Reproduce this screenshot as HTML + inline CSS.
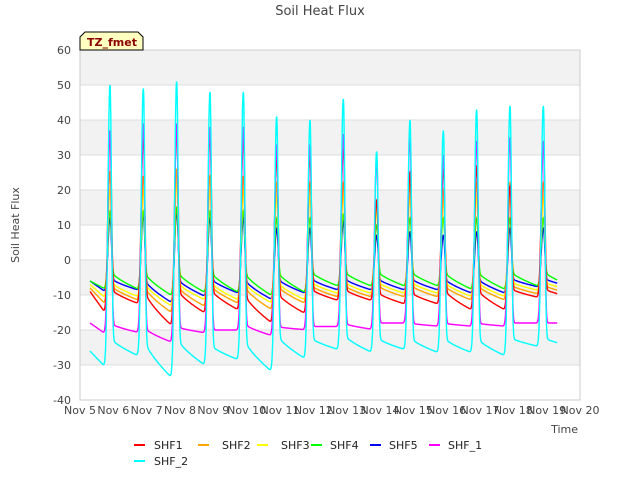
<!DOCTYPE html>
<html><head><meta charset="utf-8"><style>
body{margin:0;background:#fff;font-family:"DejaVu Sans","Liberation Sans",sans-serif;}
</style></head><body>
<svg id="s" width="640" height="480" xmlns="http://www.w3.org/2000/svg" font-family="DejaVu Sans, Liberation Sans, sans-serif">
<rect width="640" height="480" fill="#fff"/>
<g id="bands"></g>
<rect x="80" y="50" width="500" height="350" fill="none" stroke="#ccc"/>
<text x="320" y="15" text-anchor="middle" font-size="13" fill="#444">Soil Heat Flux</text>
<text x="19" y="225" font-size="11" fill="#444" text-anchor="middle" transform="rotate(-90 19 225)">Soil Heat Flux</text>
<text x="578" y="433" font-size="11" fill="#444" text-anchor="end">Time</text>
<g id="ticks" font-size="11" fill="#444"></g>
<g id="lines" fill="none"></g>
<path d="M80,50 L80,37 L85,32 L138,32 L143,37 L143,50 Z" fill="#ffffc0" stroke="#000"/>
<text x="87" y="46" font-size="11" font-weight="bold" fill="#8b0000">TZ_fmet</text>
<g font-size="11" fill="#222">
<line x1="134" y1="445" x2="145" y2="445" stroke="#f00" stroke-width="2"/><text x="154" y="449">SHF1</text>
<line x1="198" y1="445" x2="209" y2="445" stroke="#ffa500" stroke-width="2"/><text x="222" y="449">SHF2</text>
<line x1="257" y1="445" x2="268" y2="445" stroke="#ff0" stroke-width="2"/><text x="281" y="449">SHF3</text>
<line x1="311" y1="445" x2="322" y2="445" stroke="#0f0" stroke-width="2"/><text x="330" y="449">SHF4</text>
<line x1="370" y1="445" x2="381" y2="445" stroke="#00f" stroke-width="2"/><text x="389" y="449">SHF5</text>
<line x1="429" y1="445" x2="440" y2="445" stroke="#f0f" stroke-width="2"/><text x="448" y="449">SHF_1</text>
<line x1="134" y1="461" x2="145" y2="461" stroke="#0ff" stroke-width="2"/><text x="154" y="465">SHF_2</text>
</g>
</svg>
<script>
var NS="http://www.w3.org/2000/svg";
function el(p,n,a,t){var e=document.createElementNS(NS,n);for(var k in a)e.setAttribute(k,a[k]);if(t!=null)e.textContent=t;p.appendChild(e);return e;}
var Y=function(v){return 400-(v+40)*3.5;},X=function(d){return 80+(d-5)*33.333;};
var b=document.getElementById('bands'),tk=document.getElementById('ticks');
el(b,'rect',{x:80,y:50,width:500,height:350,fill:'#fff'});
for(var v=60;v>-40;v-=20)el(b,'rect',{x:80,y:Y(v),width:500,height:35,fill:'#f2f2f2'});
for(var v=-30;v<60;v+=10)el(b,'line',{x1:80,x2:580,y1:Y(v),y2:Y(v),stroke:'#ddd'});
for(var v=-40;v<=60;v+=10)el(tk,'text',{x:71,y:Y(v)+4,'text-anchor':'end'},v);
for(var d=5;d<=20;d++)el(tk,'text',{x:X(d),y:414,'text-anchor':'middle'},'Nov '+d);
var S=[
['#0ff',-26,[-22,-22,-22,-24,-22,-21,-22,-21,-22,-22,-22,-22,-22,-22],[-27,-32,-28,-35,-31,-29,-33,-29,-26,-27,-26,-27,-27,-28,-25],[50,49,51,48,48,41,40,46,31,40,37,43,44,44]],
['#f0f',-18,[-18,-19,-19,-20,-18,-19,-19,-18,-18,-18,-18,-18,-18,-18],[-18,-22,-21,-24,-21,-20,-22,-20,-19,-20,-18,-19,-19,-19,-18],[37,39,39,38,38,33,33,36,29,35,30,34,35,34]],
['#f00',-9,[-8,-8,-8,-8,-9,-9,-8,-8,-9,-9,-8,-8,-8,-8],[-12,-17,-13,-20,-16,-15,-19,-16,-12,-12,-13,-13,-15,-15,-11],[36,35,38,36,35,30,30,32,17,25,26,27,21,34]],
['#ffa500',-8,[-7,-7,-7,-7,-7,-7,-7,-7,-7,-7,-7,-7,-7,-7],[-11,-14,-12,-16,-14,-13,-15,-13,-11,-11,-11,-11,-12,-12,-10],[25,24,26,24,24,22,22,22,17,22,20,22,22,22]],
['#ff0',-7,[-6,-6,-6,-6,-6,-6,-6,-6,-6,-6,-6,-6,-6,-6],[-10,-12,-11,-14,-12,-12,-13,-12,-10,-10,-10,-10,-11,-11,-9],[20,20,22,20,20,18,18,19,14,18,17,18,18,18]],
['#0f0',-6,[-3,-3,-3,-3,-3,-3,-3,-3,-3,-3,-3,-3,-3,-3],[-8,-9,-9,-11,-10,-10,-11,-10,-8,-8,-8,-8,-9,-9,-8],[14,14,15,14,14,12,12,13,10,12,12,12,12,12]],
['#00f',-6,[-5,-5,-5,-5,-5,-5,-5,-5,-5,-5,-5,-5,-5,-5],[-8,-10,-9,-13,-11,-10,-12,-10,-9,-9,-9,-9,-10,-10,-8],[12,13,14,12,12,9,9,11,7,8,7,8,9,9]]
];
var g=document.getElementById('lines');
S.slice().reverse().forEach(function(s){
 var col=s[0],st=s[1],A=s[2],B=s[3],Pk=s[4],pts=[];
 for(var t=5.3;t<=19.32;t+=0.008){
  // base
  var base,j=Math.floor(t-5.9);
  if(j<0){var u=(t-5.3)/0.6;base=st+(B[1]-st)*u;}
  else{var u=t-5.9-j;var nb=B[Math.min(j+2,14)];base=A[Math.min(j,13)]+(nb-A[Math.min(j,13)])*Math.pow(u,0.7);}
  var k=Math.max(0,Math.min(13,Math.round(t-5.9)));
  var c=5.9+k,dd=t-c,sg=dd<0?0.085:0.06;
  var w=Math.exp(-Math.pow(Math.abs(dd)/sg,2.2));
  var v=w*Pk[k]+(1-w)*base;
  pts.push(X(t).toFixed(1)+','+Y(v).toFixed(1));
 }
 el(g,'polyline',{points:pts.join(' '),stroke:col,'stroke-width':1.4});
});
</script>
</body></html>
